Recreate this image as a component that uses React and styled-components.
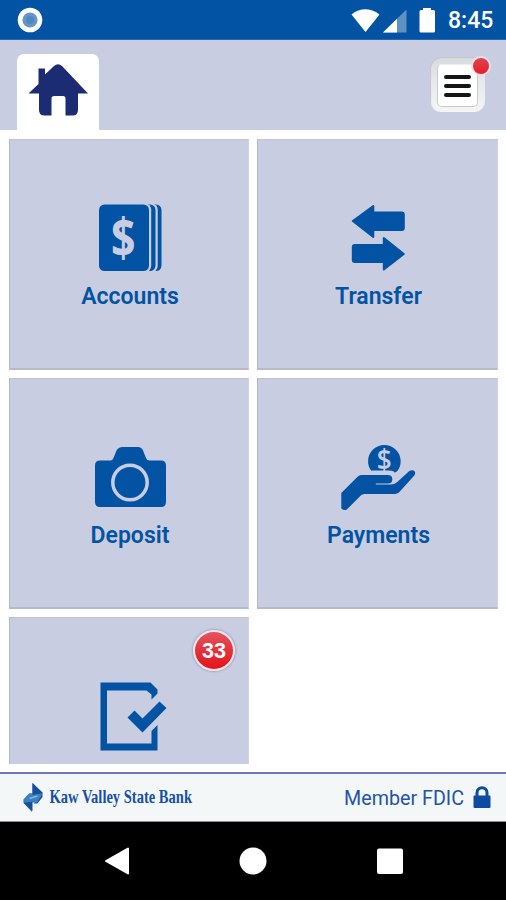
import React from 'react';
import styled, { createGlobalStyle } from 'styled-components';

const BLUE = '#0353a4';
const LAVENDER = '#c9cde2';

const GlobalStyle = createGlobalStyle`
  * {
    box-sizing: border-box;
  }

  body {
    margin: 0;
    background: #fff;
    font-family: Roboto, sans-serif;
  }

  svg {
    display: block;
    overflow: visible;
  }
`;

const Screen = styled.div`
  display: flex;
  flex-direction: column;
  width: 506px;
  height: 900px;
  overflow: hidden;
  background: #fff;
`;

// Android status bar
const StatusBar = styled.div`
  display: flex;
  justify-content: space-between;
  align-items: center;
  flex: none;
  height: 40px;
  padding: 0 12px 0 17px;
  background: ${BLUE};
  border-bottom: 1px solid #2a64ae;
`;

const StatusIcons = styled.div`
  display: flex;
  align-items: center;
`;

const Clock = styled.span`
  width: 46px;
  margin-left: 11px;
  padding-top: 2px;
  color: #fff;
  font-size: 23px;
  font-weight: 500;
  line-height: 28px;
  white-space: nowrap;
`;

// Header with the home tab and the menu button
const Header = styled.header`
  display: flex;
  justify-content: space-between;
  align-items: flex-end;
  flex: none;
  height: 90px;
  padding: 0 21px 0 17px;
  background: ${LAVENDER};
`;

const HomeTab = styled.div`
  display: flex;
  justify-content: center;
  width: 82px;
  height: 76px;
  padding: 8px 1px 0 0;
  border-radius: 7px 7px 0 0;
  background: #fff;
`;

const MenuButton = styled.button`
  position: relative;
  width: 55px;
  height: 55px;
  margin-bottom: 18px;
  padding: 7px;
  border: none;
  border-radius: 11px;
  background: linear-gradient(#d8d9dc, #e6e8e9 40%, #f4f6f6);
  box-shadow: inset 1px 1px 1px #c3c5cc;
`;

const MenuFace = styled.span`
  display: flex;
  flex-direction: column;
  justify-content: center;
  align-items: center;
  gap: 5px;
  width: 41px;
  height: 43px;
  padding-top: 1px;
  border: 1px solid #c9cacb;
  border-top-color: #eee;
  border-radius: 5px;
  background: #fff;
`;

const MenuLine = styled.span`
  width: 27px;
  height: 4px;
  border-radius: 2px;
  background: #151515;
`;

const AlertDot = styled.span`
  position: absolute;
  top: -1px;
  right: -6px;
  width: 20px;
  height: 20px;
  border: 2px solid #f1dfe6;
  border-radius: 50%;
  background: linear-gradient(#e0434f, #e3202b);
`;

// Grid of tiles, the last row is cut off by the footer
const Main = styled.main`
  flex: none;
  height: 634px;
  margin-bottom: 8px;
  padding: 9px 8px 0 9px;
  overflow: hidden;
`;

const Grid = styled.div`
  display: grid;
  grid-template-columns: 240px 241px;
  grid-auto-rows: 231px;
  gap: 8px;
`;

const TileBox = styled.div`
  position: relative;
  display: flex;
  flex-direction: column;
  align-items: center;
  padding-top: 59px;
  background: ${LAVENDER};
  border-left: 1px solid #b4b7c6;
  border-right: 1px solid #d0d3e4;
  border-bottom: 2px solid #b6bac9;
  border-top: 1px solid #c0c3d3;
`;

const TileLabel = styled.span`
  margin-top: 2px;
  padding-left: 2px;
  color: ${BLUE};
  font-size: 23px;
  font-weight: 600;
  line-height: 32px;
`;

const Badge = styled.span`
  position: absolute;
  top: 12px;
  right: 13px;
  width: 42px;
  height: 41px;
  border: 2px solid #f3e4ea;
  border-radius: 50%;
  background: linear-gradient(#e4545f, #e3323c 50%, #e5121b);
  box-shadow: 0 0 2px 1px #9ea9c0;
  color: #fff;
  font-family: 'Liberation Sans', Arial, sans-serif;
  font-size: 21.5px;
  font-weight: 700;
  line-height: 38px;
  text-align: center;
`;

const Footer = styled.footer`
  display: flex;
  justify-content: space-between;
  align-items: center;
  flex: none;
  height: 50px;
  padding: 0 15px 0 22px;
  background: #f4f7f8;
  border-top: 2px solid #6a7bb8;
  border-bottom: 1px solid #8a8c8d;
`;

const Member = styled.div`
  display: flex;
  align-items: center;
  gap: 9px;
  color: #2454a5;
  font-size: 19.7px;
  line-height: 26px;
`;

const MemberText = styled.span`
  padding-top: 2px;
`;

const NavBar = styled.nav`
  display: flex;
  align-items: center;
  justify-content: space-between;
  flex: 1;
  padding: 0 102px 1px 104px;
  background: #000;
`;

const CameraDot = () => (
  <svg width="26" height="26" viewBox="0 0 26 26">
    <circle cx="13" cy="13" r="12.3" fill="#fff" />
    <circle cx="13" cy="13" r="7.6" fill="#6496c8" />
    <circle cx="13" cy="13" r="4" fill="#4f87bf" />
  </svg>
);

const SignalIcons = () => (
  <svg width="90" height="26" viewBox="0 0 90 26">
    <path d="M4.500 7.400Q18-2.800 32.500 7.400L18.500 25z" fill="#fff" />
    <path d="M59.500 2.400V25.400H36z" fill="#5e92c5" />
    <path d="M50 11.700V25.400H36z" fill="#fff" />
    <path
      d="M76 1h8v2h2.500a1.500 1.500 0 0 1 1.500 1.500V24a1.500 1.500 0 0 1-1.500 1.500h-12.500a1.500 1.500 0 0 1-1.500-1.500V4.500A1.500 1.500 0 0 1 74 3h2z"
      fill="#fff"
    />
  </svg>
);

const HomeIcon = () => (
  <svg width="62" height="56" viewBox="0 0 62 56">
    <path
      d="M1.500 31.500 11.500 22V6.500h6.500v6L27 4q4-3.500 8 0L61 31.500h-10V48q0 5.500-5.500 5.500H38.500V36.500q0-2.500-2.500-2.500H27q-2.500 0-2.500 2.500v17H17.500Q12 53.500 12 48V31.500z"
      fill="#1b2c72"
    />
  </svg>
);

// Right edges of the stacked pages, back to front, with a gap before each one
const AccountsIcon = () => (
  <svg width="90" height="80" viewBox="0 0 90 80">
    <rect x="28" y="5.500" width="49.500" height="66.500" rx="5.500" fill={BLUE} />
    <rect x="24" y="4.500" width="49.700" height="68.500" rx="6" fill={LAVENDER} />
    <rect x="22" y="5.500" width="49.500" height="66.500" rx="5.500" fill={BLUE} />
    <rect x="14" y="4.500" width="53.200" height="68.500" rx="6" fill={LAVENDER} />
    <rect x="15" y="5.500" width="50" height="66.500" rx="5.500" fill={BLUE} />
    <text
      x="27"
      y="58"
      fill={LAVENDER}
      fontFamily="Open Sans, sans-serif"
      fontSize="53"
      fontWeight="700"
      textLength="24.500"
      lengthAdjust="spacingAndGlyphs"
    >
      $
    </text>
  </svg>
);

const TransferIcon = () => (
  <svg width="90" height="80" viewBox="0.700 0 90 80">
    <g fill={BLUE} stroke={BLUE} strokeWidth="2" strokeLinejoin="round">
      <path d="M20.500 22 41 7V13.500H69.500Q71.500 13.500 71.500 15.500V29Q71.500 31 69.500 31H41V38z" />
      <path d="M71.500 55 51.500 39V46H22.500Q20.500 46 20.500 48V61Q20.500 63 22.500 63H51.500V70.500z" />
    </g>
  </svg>
);

const DepositIcon = () => (
  <svg width="90" height="80" viewBox="0 0 90 80">
    <path
      d="M16 22.500H26.500Q28.500 22.500 29.500 20L32.500 12.500Q34.500 9 38.500 9H54Q57.500 9 59 12.500L62 20Q63 22.500 65.500 22.500H77Q82 22.500 82 27.500V64Q82 69 77 69H16Q11 69 11 64V27.500Q11 22.500 16 22.500z"
      fill={BLUE}
    />
    <circle cx="46" cy="44.500" r="17.200" fill="none" stroke={LAVENDER} strokeWidth="3.500" />
  </svg>
);

const PaymentsIcon = () => (
  <svg width="90" height="80" viewBox="0.700 0 90 80">
    <path d="M39 33A16.300 16.300 0 1 1 65.500 32.500Q62 36 61.500 33.500Q60 32.500 56 32.500H39z" fill={BLUE} />
    <text
      x="44.500"
      y="31.500"
      fill={LAVENDER}
      fontFamily="Open Sans, sans-serif"
      fontSize="29"
      fontWeight="600"
      textLength="15"
      lengthAdjust="spacingAndGlyphs"
    >
      $
    </text>
    <path
      d="M9 55 25 39Q27 37 29 37H55.500Q60 37 60 41.200Q60 45.500 56 45.500H43.500V46.500H58.500Q62 46.500 65 44L77 33Q80.500 31.500 82.500 33.500Q83.500 35.500 82 37.500L68 53Q66 56 63 56H32Q30 56 28.500 57.500L14.500 71.500Q12 73 9 70.500z"
      fill={BLUE}
    />
  </svg>
);

const TaskIcon = () => (
  <svg width="90" height="80" viewBox="0 0 90 80">
    <g fill={BLUE}>
      <path d="M16.500 5.500H66.500L73.500 12.500V16.500L67.500 22.500V17.500L62.500 13.500H23V66.500H67.500V54L73.500 48V73.500H16.500z" />
      <path d="M43.500 40.500 50.500 33.500 58.500 41.500 75.500 24.500 82.500 31 58.500 55.500z" />
    </g>
  </svg>
);

const BankLogo = () => (
  <svg width="174" height="34" viewBox="0 0 174 34">
    <path d="M10.500 2 20.500 11.500 20.500 16 15.500 22.500H11.500L19 14.500H10.500z" fill="#17549f" />
    <path d="M10 31 1.500 22 1.500 18.500 7 12.500H10.500L4 20H10z" fill="#2a6cb4" />
    <path d="M1.500 19 7.500 12.500H20.500L15 21.500H4z" fill="#3c80c2" />
    <path d="M10.500 2V14L20.500 12zM10.500 30V20.500L2 22z" fill="#165099" />
    <path d="M7.500 17.500 15.500 15" stroke="#86b6dc" strokeWidth="1.500" />
    <text
      x="27.500"
      y="21.500"
      fill="#1750a3"
      fontFamily="Liberation Serif, serif"
      fontSize="19.500"
      fontWeight="700"
      textLength="142.500"
      lengthAdjust="spacingAndGlyphs"
    >
      Kaw Valley State Bank
    </text>
  </svg>
);

const LockIcon = () => (
  <svg width="18" height="24" viewBox="0 0 18 24">
    <rect x="0.500" y="9.500" width="17" height="12.500" rx="1" fill="#0e4ca1" />
    <path d="M4 10.500V6.700a5 5 0 0 1 10 0V10.500" fill="none" stroke="#0e4ca1" strokeWidth="3" />
  </svg>
);

const tiles = [
  { label: 'Accounts', icon: <AccountsIcon /> },
  { label: 'Transfer', icon: <TransferIcon /> },
  { label: 'Deposit', icon: <DepositIcon /> },
  { label: 'Payments', icon: <PaymentsIcon /> },
  { icon: <TaskIcon />, badge: 33 },
];

const Tile = ({ label, icon, badge }) => (
  <TileBox>
    {icon}
    {label && <TileLabel>{label}</TileLabel>}
    {badge && <Badge>{badge}</Badge>}
  </TileBox>
);

const App = () => {
  return (
    <>
      <GlobalStyle />
      <Screen>
        <StatusBar>
          <CameraDot />
          <StatusIcons>
            <SignalIcons />
            <Clock>8:45</Clock>
          </StatusIcons>
        </StatusBar>

        <Header>
          <HomeTab>
            <HomeIcon />
          </HomeTab>
          <MenuButton aria-label="Menu">
            <MenuFace>
              <MenuLine />
              <MenuLine />
              <MenuLine />
            </MenuFace>
            <AlertDot />
          </MenuButton>
        </Header>

        <Main>
          <Grid>
            {tiles.map((tile, i) => (
              <Tile key={i} {...tile} />
            ))}
          </Grid>
        </Main>

        <Footer>
          <BankLogo />
          <Member>
            <MemberText>Member FDIC</MemberText>
            <LockIcon />
          </Member>
        </Footer>

        {/* Android navigation buttons */}
        <NavBar>
          <svg width="26" height="28" viewBox="0 0 26 28">
            <path d="M2 14 24 1.500V26.500z" fill="#fff" stroke="#fff" strokeWidth="2" strokeLinejoin="round" />
          </svg>
          <svg width="28" height="28" viewBox="0 0 28 28">
            <circle cx="14" cy="14" r="13.500" fill="#fff" />
          </svg>
          <svg width="28" height="28" viewBox="0 0 28 28">
            <rect x="1" y="1.500" width="26" height="25.500" rx="2" fill="#fff" />
          </svg>
        </NavBar>
      </Screen>
    </>
  );
};

export default App;
